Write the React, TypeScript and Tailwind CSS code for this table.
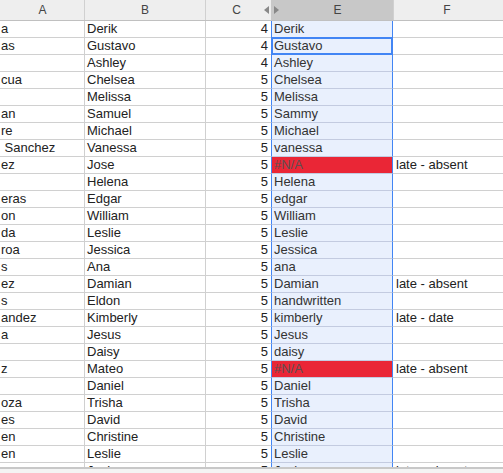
import React from "react";

type Row = { a: string; b: string; c: number; e: string; f?: string };

const rows: Row[] = [
  { a: "a", b: "Derik", c: 4, e: "Derik" },
  { a: "as", b: "Gustavo", c: 4, e: "Gustavo" },
  { a: "", b: "Ashley", c: 4, e: "Ashley" },
  { a: "cua", b: "Chelsea", c: 5, e: "Chelsea" },
  { a: "", b: "Melissa", c: 5, e: "Melissa" },
  { a: "an", b: "Samuel", c: 5, e: "Sammy" },
  { a: "re", b: "Michael", c: 5, e: "Michael" },
  { a: " Sanchez", b: "Vanessa", c: 5, e: "vanessa" },
  { a: "ez", b: "Jose", c: 5, e: "#N/A", f: "late - absent" },
  { a: "", b: "Helena", c: 5, e: "Helena" },
  { a: "eras", b: "Edgar", c: 5, e: "edgar" },
  { a: "on", b: "William", c: 5, e: "William" },
  { a: "da", b: "Leslie", c: 5, e: "Leslie" },
  { a: "roa", b: "Jessica", c: 5, e: "Jessica" },
  { a: "s", b: "Ana", c: 5, e: "ana" },
  { a: "ez", b: "Damian", c: 5, e: "Damian", f: "late - absent" },
  { a: "s", b: "Eldon", c: 5, e: "handwritten" },
  { a: "andez", b: "Kimberly", c: 5, e: "kimberly", f: "late - date" },
  { a: "a", b: "Jesus", c: 5, e: "Jesus" },
  { a: "", b: "Daisy", c: 5, e: "daisy" },
  { a: "z", b: "Mateo", c: 5, e: "#N/A", f: "late - absent" },
  { a: "", b: "Daniel", c: 5, e: "Daniel" },
  { a: "oza", b: "Trisha", c: 5, e: "Trisha" },
  { a: "es", b: "David", c: 5, e: "David" },
  { a: "en", b: "Christine", c: 5, e: "Christine" },
  { a: "en", b: "Leslie", c: 5, e: "Leslie" },
  { a: "os", b: "Joshua", c: 5, e: "Joshua", f: "late - absent" },
];

function Arrow({ dir }: { dir: "left" | "right" }) {
  return (
    <svg width="5" height="8" viewBox="0 0 5 8" className="block">
      {dir === "left" ? (
        <polygon points="5,0 5,8 0,4" fill="#888" />
      ) : (
        <polygon points="0,0 0,8 5,4" fill="#888" />
      )}
    </svg>
  );
}

export default function App() {
  return (
    <div
      className="relative w-[503px] h-[473px] overflow-hidden bg-white text-[13px] text-[#222]"
      style={{ fontFamily: '"Liberation Sans", Arial, sans-serif' }}
    >
      {/* column headers */}
      <div className="flex h-[21px] border-b border-[#c0c0c0] bg-[#eeeeee] text-[12px] text-[#444]">
        <div className="w-[85px] shrink-0 border-r border-[#d0d0d0] flex items-center justify-center pl-[1px]">
          A
        </div>
        <div className="w-[121px] shrink-0 border-r border-[#d0d0d0] flex items-center justify-center">
          B
        </div>
        <div className="w-[65px] shrink-0 flex items-center">
          <span className="flex-1 text-center pl-[3px]">C</span>
          <span className="pr-[2px]">
            <Arrow dir="left" />
          </span>
        </div>
        <div className="w-[122px] shrink-0 bg-[#c8c8c8] flex items-center">
          <span className="pl-[3px]">
            <Arrow dir="right" />
          </span>
          <span className="flex-1 text-center pl-[3px]">E</span>
        </div>
        <div className="flex-1 flex items-center justify-center border-l border-[#d0d0d0] pr-[3px]">
          F
        </div>
      </div>

      {/* grid body */}
      <div className="h-[446px] overflow-hidden">
        {rows.map((r, i) => {
          const na = r.e === "#N/A";
          return (
            <div key={i} className="flex h-[17px] leading-[16px]">
              <div className="w-[85px] shrink-0 border-r border-b border-[#d0d0d0] pl-[1px] whitespace-pre overflow-hidden">
                {r.a}
              </div>
              <div className="w-[121px] shrink-0 border-r border-b border-[#d0d0d0] pl-[2px] overflow-hidden">
                {r.b}
              </div>
              <div className="w-[65px] shrink-0 border-b border-[#d0d0d0] text-right pr-[3px]">
                {r.c}
              </div>
              <div
                className={
                  na
                    ? "w-[122px] shrink-0 border-l border-r border-[#4285f4] border-b-[#c3cbe0] border-b bg-[#ea2636] text-[#5e4f52] pl-[2px]"
                    : "w-[122px] shrink-0 border-l border-r border-[#4285f4] border-b-[#c3cbe0] border-b bg-[#e9f0fd] text-[#333] pl-[2px]"
                }
              >
                {r.e}
              </div>
              <div className="flex-1 border-b border-[#d0d0d0] pl-[3px] whitespace-nowrap">
                {r.f}
              </div>
            </div>
          );
        })}
      </div>

      {/* bottom scroll strip */}
      <div className="h-[6px] border-t-2 border-double border-[#c8c8c8] bg-[#f4f4f4]" />

      {/* selected cell */}
      <div className="absolute left-[271px] top-[37px] w-[122px] h-[18px] border-2 border-[#4285f4] pointer-events-none" />
    </div>
  );
}
